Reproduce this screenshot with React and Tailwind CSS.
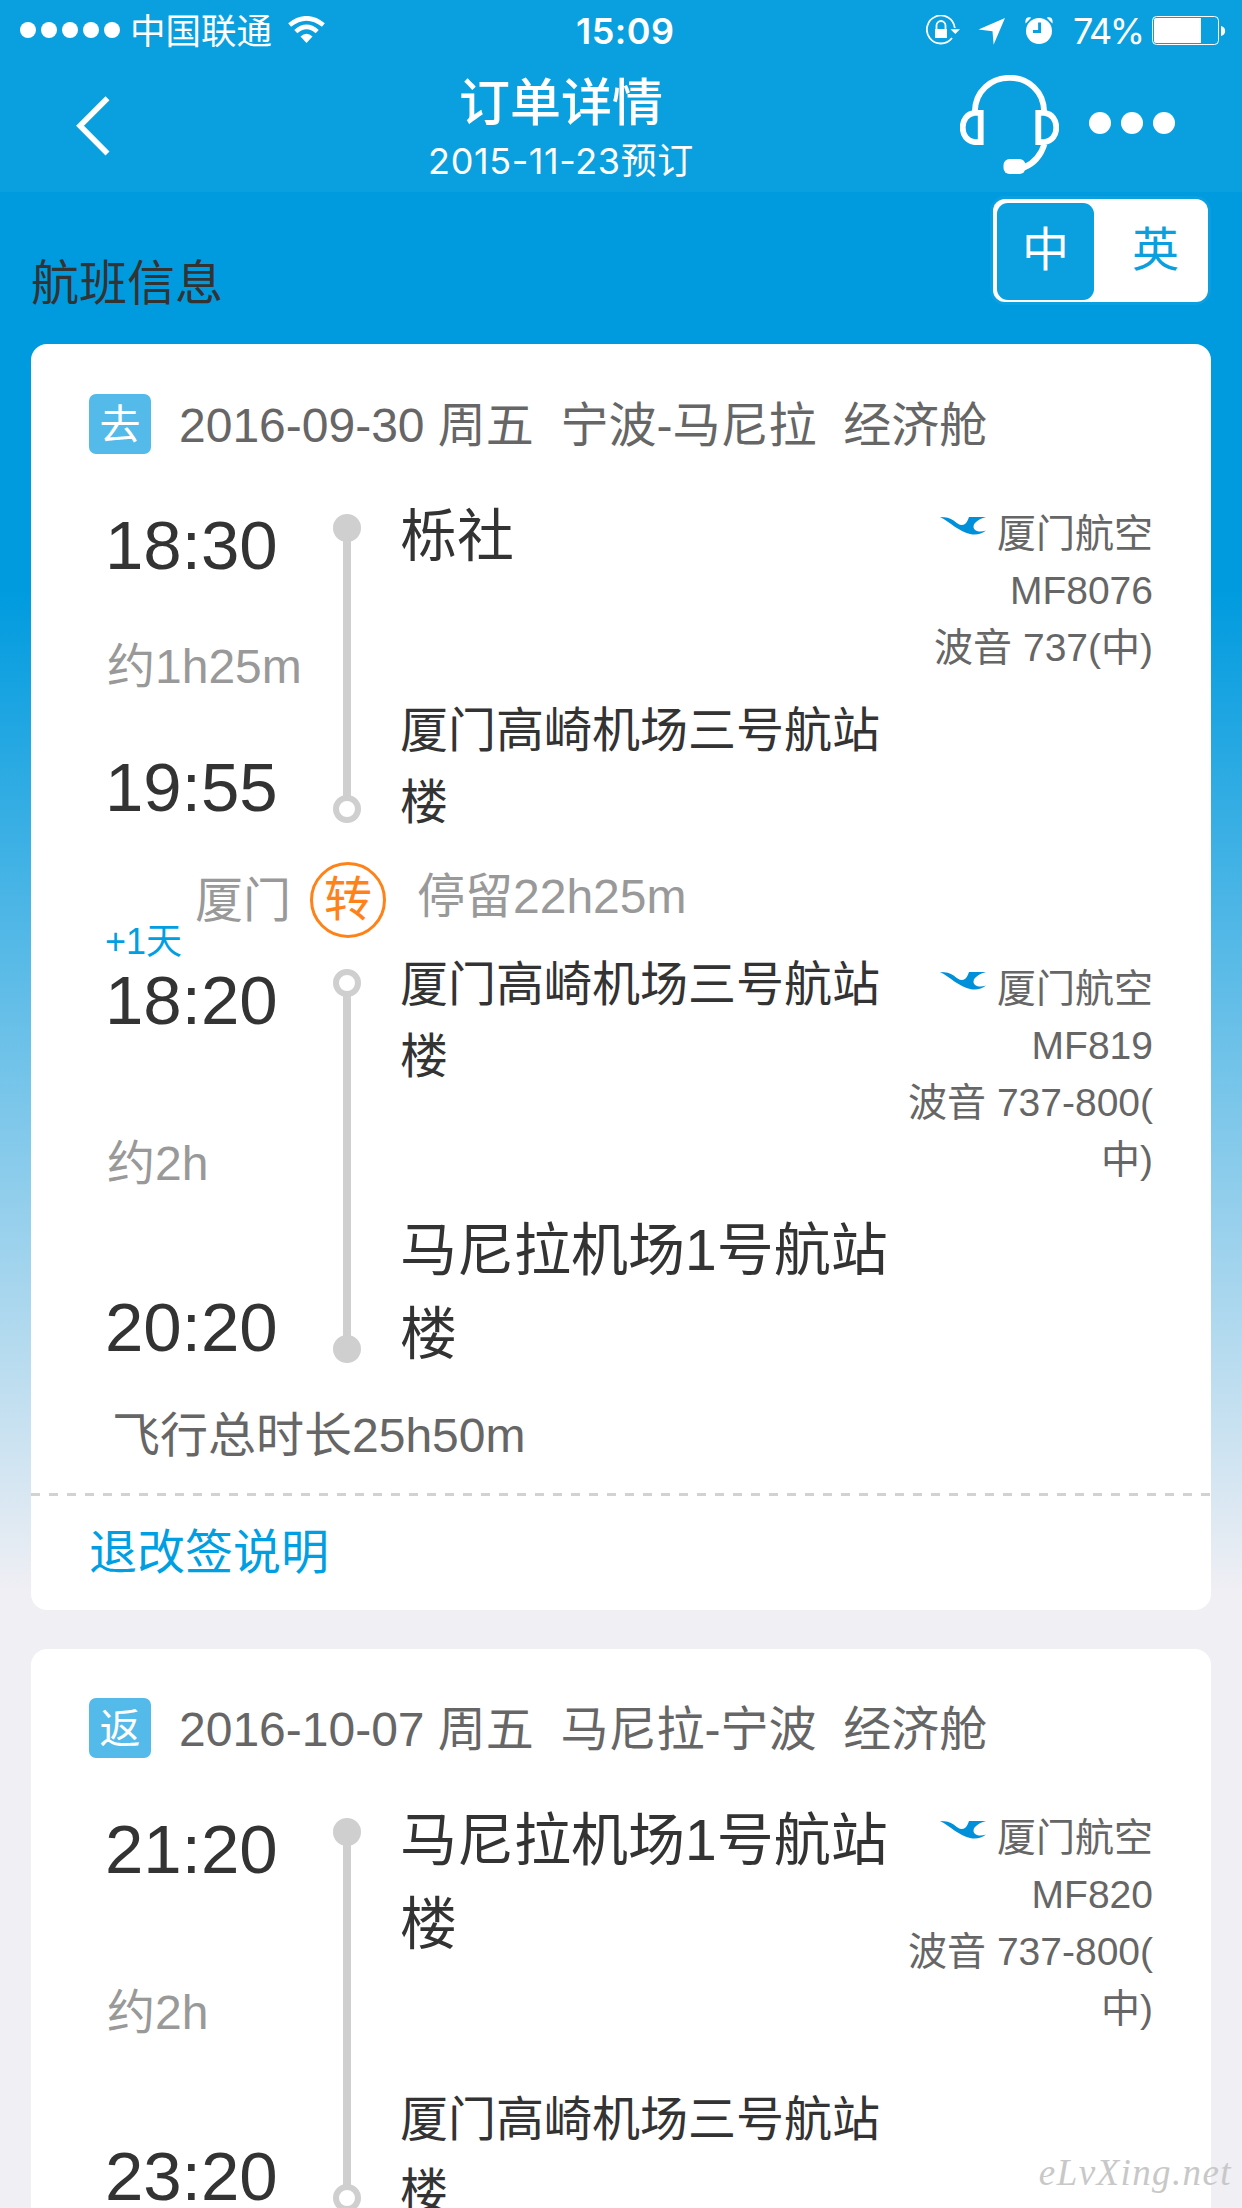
import clsx from "clsx";

const trips = [
  {
    tag: "去",
    title: "2016-09-30 周五  宁波-马尼拉  经济舱",
    segments: [
      {
        depTime: "18:30",
        arrTime: "19:55",
        duration: "约1h25m",
        from: "栎社",
        to: "厦门高崎机场三号航站楼",
        toTransfer: true,
        airline: "厦门航空",
        flightNo: "MF8076",
        plane: "波音 737(中)",
        short: true,
      },
      {
        transfer: { city: "厦门", stay: "停留22h25m" },
        extraDay: "+1天",
        depTime: "18:20",
        arrTime: "20:20",
        duration: "约2h",
        from: "厦门高崎机场三号航站楼",
        fromTransfer: true,
        to: "马尼拉机场1号航站楼",
        airline: "厦门航空",
        flightNo: "MF819",
        plane: "波音 737-800(中)",
      },
    ],
    total: "飞行总时长25h50m",
  },
  {
    tag: "返",
    title: "2016-10-07 周五  马尼拉-宁波  经济舱",
    segments: [
      {
        depTime: "21:20",
        arrTime: "23:20",
        duration: "约2h",
        from: "马尼拉机场1号航站楼",
        to: "厦门高崎机场三号航站楼",
        toTransfer: true,
        airline: "厦门航空",
        flightNo: "MF820",
        plane: "波音 737-800(中)",
      },
    ],
  },
];

function StatusBar() {
  return (
    <div className="flex h-[60px] items-start pl-5 pt-[13px] text-[36px] leading-[36px]">
      <div className="mt-[9px] flex gap-[5px]">
        {[0, 1, 2, 3, 4].map((i) => (
          <span key={i} className="size-4 rounded-full bg-white" />
        ))}
      </div>
      <span className="ml-[10px] w-[158px] whitespace-nowrap pt-px text-[35.5px]">中国联通</span>
      <svg className="mt-[3px]" width="37" height="28" viewBox="0 0 37 28" fill="none" stroke="white" strokeWidth="4.6">
        <path d="M1.6 9 Q18.5 -4.4 35.4 9" />
        <path d="M7.8 15.6 Q18.5 6 29.2 15.6" />
        <path d="M12.5 20.6 Q18.5 14.8 24.5 20.6 L18.5 27z" fill="white" stroke="none" />
      </svg>
      <span className="ml-[251px] w-[101px] font-semibold tracking-[0.5px]">15:09</span>
      <div className="ml-[249px] flex">
        <svg className="mt-[2px]" width="34" height="30" viewBox="0 0 34 30" fill="none" stroke="white">
          <path d="M28.8 13 A14 14 0 1 0 26 23" strokeWidth="1.8" />
          <path d="M24.5 14.3 H34 L29.3 19z" fill="white" stroke="none" />
          <path d="M10.5 15 V10.5 a4.5 4.5 0 0 1 9 0 V15" strokeWidth="1.8" />
          <path d="M9 14 h12 v9 h-12z" fill="white" stroke="none" />
        </svg>
        <svg className="ml-[18px] mt-[5px]" width="27" height="27" viewBox="0 0 27 27" fill="white">
          <path d="M27 0 L15.6 26.7 L14.5 13.2 L0.5 11.5z" />
        </svg>
        <svg className="ml-5 mt-[4px]" width="28" height="28" viewBox="0 0 28 28">
          <circle cx="14" cy="14" r="13" fill="white" />
          <path d="M0.6 6.4 C-0.4 1.5 2.5 -0.6 6.2 0.8z M27.4 6.4 C28.4 1.5 25.5 -0.6 21.8 0.8z" fill="white" />
          <path d="M14.6 5.5 V14.5 H8" fill="none" stroke="#0a9fdf" strokeWidth="3" />
        </svg>
        <span className="ml-[20px] w-[79px] tracking-[-2.4px]">74%</span>
        <svg className="mt-[3px]" width="74" height="29" viewBox="0 0 74 29">
          <rect x="0.5" y="0.5" width="66" height="28" rx="4" fill="none" stroke="white" />
          <path d="M4 2 H49 V27 H4 a2 2 0 0 1 -2 -2 V4 a2 2 0 0 1 2 -2z" fill="white" />
          <path d="M69 10 C74.5 11 74.5 19 69 20z" fill="white" />
        </svg>
      </div>
    </div>
  );
}

function NavBar() {
  return (
    <div className="flex h-[132px] items-start">
      <div className="w-[400px] pl-[76px] pt-9">
        <svg width="34" height="60" viewBox="0 0 34 60" fill="none" stroke="white" strokeWidth="5.6">
          <path d="M31.5 2.2 L4 29.8 L31.5 57.4" />
        </svg>
      </div>
      <div className="flex w-[322px] flex-col items-center gap-[15px] whitespace-nowrap pt-[17px]">
        <h1 className="text-[51px] font-medium leading-[51px]">订单详情</h1>
        <p className="text-[36px] leading-[36px] tracking-[0.6px]">2015-11-23预订</p>
      </div>
      <svg className="ml-[238px] mt-[15px]" width="99" height="99" viewBox="0 0 99 99" fill="none" stroke="white" strokeWidth="5.8">
        <path d="M14.8 37 C15 16 31 2.8 49.5 2.8 S84 16 84.2 37" />
        <path d="M20.7 37.8 H14.5 C7 38.6 2.7 45 2.7 52.5 S7 66.4 14.5 67.2 H20.7z" />
        <path d="M78.3 37.8 H84.5 C92 38.6 96.3 45 96.3 52.5 S92 66.4 84.5 67.2 H78.3z" />
        <path d="M84.5 69 C81 80 75 88 64 92.5" />
        <rect x="43.5" y="84" width="22" height="15" rx="6" fill="white" stroke="none" />
      </svg>
      <div className="ml-[30px] mt-[52px] flex gap-[10px]">
        {[0, 1, 2].map((i) => (
          <span key={i} className="size-[22px] rounded-full bg-white" />
        ))}
      </div>
    </div>
  );
}

function AirlineLogo() {
  return (
    <svg className="mt-3" width="46" height="18" viewBox="0 0 46 18" fill="#0090da">
      <path d="M0 0 C6 0 10 1 14 3.8 C17 6.5 19 8 22 8 C26 8 27.5 4 29 0 H46 C40 1.5 34 5 33.5 9.5 C33.5 14.5 40 15.5 46 13.5 C42 17.3 36 18 31 17.2 C19 15 10 5 0 0z" />
    </svg>
  );
}

function Timeline({ startHollow, endHollow }) {
  const dot = "size-7 shrink-0 rounded-full border-[6px] border-[#cfcfcf]";
  return (
    <div className="flex w-7 flex-col items-center">
      <span className={clsx(dot, !startHollow && "bg-[#cfcfcf]")} />
      <span className="-my-px w-2 flex-1 bg-[#cfcfcf]" />
      <span className={clsx(dot, !endHollow && "bg-[#cfcfcf]")} />
    </div>
  );
}

function Airport({ name, small }) {
  return (
    <p className={small ? "text-[48px] leading-[72px]" : "mb-[3px] text-[57px] leading-[84px]"}>
      {name}
    </p>
  );
}

function Transfer({ city, stay }) {
  return (
    <div className="mb-[31px] mt-[39px] flex h-[76px] items-center text-[48px] leading-[48px] text-[#999]">
      <span className="w-[279px] pr-[19px] pt-[2px] text-right">{city}</span>
      <span className="flex size-[76px] items-center justify-center rounded-full border-[3px] border-[#ff8218] text-[#ff8218]">
        转
      </span>
      <span className="ml-[31px] pb-[6px]">{stay}</span>
    </div>
  );
}

function Segment({ seg }) {
  return (
    <>
      {seg.transfer && <Transfer {...seg.transfer} />}
      <div className={clsx("flex pl-[74px] text-[#333]", seg.short ? "h-[309px]" : "h-[394px]")}>
        <div className="relative -mt-[3px] mb-px flex w-[228px] flex-col justify-between text-[69px] leading-[69px]">
          {seg.extraDay && (
            <span className="absolute -top-[42px] left-0 text-[36px] leading-[36px] text-[#009fe3]">
              {seg.extraDay}
            </span>
          )}
          <span>{seg.depTime}</span>
          <span className="ml-[2px] whitespace-nowrap text-[48px] leading-[48px] text-[#999]">{seg.duration}</span>
          <span>{seg.arrTime}</span>
        </div>
        <Timeline startHollow={seg.fromTransfer} endHollow={seg.toTransfer} />
        <div className="-mb-4 -mt-5 ml-[39px] flex w-[490px] flex-col justify-between">
          <Airport name={seg.from} small={seg.fromTransfer} />
          <Airport name={seg.to} small={seg.toTransfer} />
        </div>
        <div className="-mt-[9px] ml-[13px] w-[250px] text-right text-[39px] leading-[57px] text-[#666]">
          <div className="flex items-start justify-end gap-[11px]">
            <AirlineLogo />
            <span>{seg.airline}</span>
          </div>
          <p>{seg.flightNo}</p>
          <p className="[line-break:anywhere]">{seg.plane}</p>
        </div>
      </div>
    </>
  );
}

function TripCard({ trip, className }) {
  return (
    <section className={clsx("w-[1180px] shrink-0 rounded-[16px] bg-white", className)}>
      <div className="mb-[60px] flex h-[60px] items-center pl-[58px]">
        <span className="flex h-[60px] w-[62px] items-center justify-center rounded-[7px] bg-[#53bae9] pt-px text-[41px] leading-[42px] text-white">
          {trip.tag}
        </span>
        <h3 className="ml-7 whitespace-pre pt-[4px] text-[48px] leading-[48px] text-[#666]">{trip.title}</h3>
      </div>
      {trip.segments.map((seg) => (
        <Segment key={seg.flightNo} seg={seg} />
      ))}
      {trip.total && (
        <>
          <p className="mt-[49px] pl-[81px] text-[48px] leading-[48px] text-[#666]">{trip.total}</p>
          <div className="mt-[33px] h-[3px] bg-[repeating-linear-gradient(90deg,#d2d2d2_0_9px,transparent_9px_18px)]" />
          <a className="mt-[33px] block pb-[33px] pl-[58px] text-[48px] leading-[48px] text-[#009fe3]">退改签说明</a>
        </>
      )}
    </section>
  );
}

export default function App() {
  return (
    <div className="relative flex h-[2208px] w-[1242px] flex-col overflow-hidden bg-[linear-gradient(180deg,#009bdf_0_590px,#efeff4_1590px)] font-['Liberation_Sans','Noto_Sans_CJK_SC',sans-serif]">
      <header className="h-[192px] shrink-0 bg-[#0a9fdf] font-['Inter','Noto_Sans_CJK_SC',sans-serif] text-white">
        <StatusBar />
        <NavBar />
      </header>

      <div className="flex h-[152px] shrink-0 items-start justify-between pl-[31px] pr-[34px]">
        <h2 className="pt-[68px] text-[48px] leading-[48px] text-[#333]">航班信息</h2>
        <div className="mt-[7px] flex h-[103px] w-[215px] rounded-[12px] bg-white p-1 pb-0.5 text-[47px] leading-[48px] ring-[3px] ring-[#0a9fdf]">
          <span className="flex size-[97px] items-center justify-center rounded-[11px] bg-[#0a9fdf] pb-[3px] text-white">中</span>
          <span className="flex h-[97px] flex-1 items-center justify-center pb-[3px] pl-[13px] text-[#0a9fdf]">英</span>
        </div>
      </div>

      <main className="flex flex-col items-center gap-[39px]">
        <TripCard trip={trips[0]} className="pt-[50px]" />
        <TripCard trip={trips[1]} className="h-[700px] pt-[49px]" />
      </main>

      <span className="absolute right-[10px] bottom-[14px] font-['Liberation_Serif',serif] text-[37px] italic leading-[42px] tracking-[1.4px] text-[#c8c8c8]">
        eLvXing.net
      </span>
    </div>
  );
}
